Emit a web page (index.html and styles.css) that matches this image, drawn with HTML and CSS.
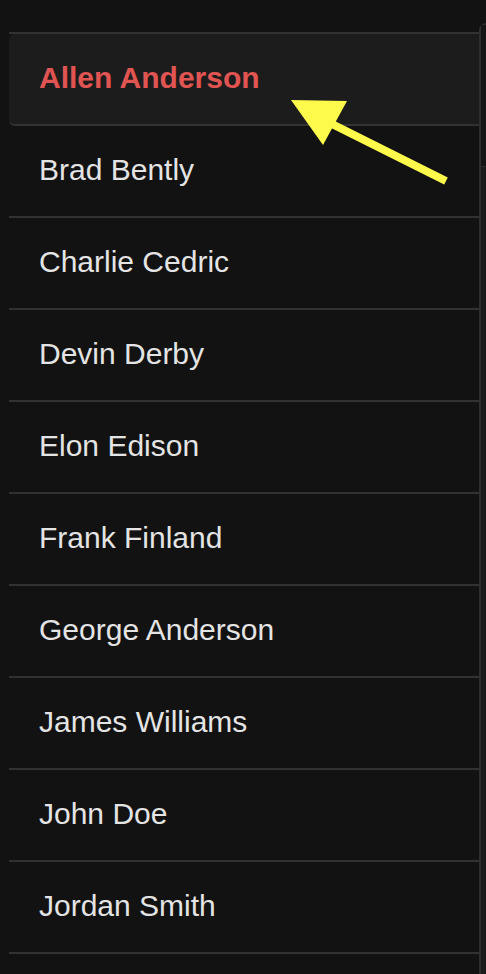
FILE: index.html
```html
<!DOCTYPE html>
<html lang="en">
<head>
    <meta charset="UTF-8">
    <meta name="viewport" content="width=device-width, initial-scale=1.0">
    <title>Contacts</title>
    <link rel="stylesheet" href="styles.css">
</head>
<body>
    <div class="panel">
        <ul class="contact-list">
            <li class="contact active">Allen Anderson</li>
            <li class="contact">Brad Bently</li>
            <li class="contact">Charlie Cedric</li>
            <li class="contact">Devin Derby</li>
            <li class="contact">Elon Edison</li>
            <li class="contact">Frank Finland</li>
            <li class="contact">George Anderson</li>
            <li class="contact">James Williams</li>
            <li class="contact">John Doe</li>
            <li class="contact">Jordan Smith</li>
        </ul>
    </div>

    <div class="side-scroll">
        <div class="side-track"></div>
        <div class="side-rest"></div>
    </div>

    <!-- annotation arrow pointing at the selected contact -->
    <svg class="pointer" width="486" height="200" viewBox="0 0 486 200">
        <line x1="332" y1="124" x2="446" y2="181" stroke="#fdfa4c" stroke-width="8" />
        <polygon points="291,100 347,101 323,145" fill="#fdfa4c" />
    </svg>
</body>
</html>
```

FILE: styles.css
```css
html, body {
    margin: 0;
    padding: 0;
}

body {
    font-family: 'Liberation Sans', Arial, Helvetica, sans-serif;
    background-color: #121212;
    color: #e4e4e4;
    display: flex;
    height: 974px;
    overflow: hidden;
    position: relative;
}

.panel {
    flex: 1;
    padding: 32px 0 0 9px;
}

.contact-list {
    list-style: none;
    margin: 0;
    padding: 0;
    border-top: 2px solid #323232;
}

.contact {
    height: 92px;
    box-sizing: border-box;
    padding: 0 0 3px 30px;
    display: flex;
    align-items: center;
    font-size: 30px;
    border-bottom: 2px solid #323232;
}

.contact.active {
    background-color: #1c1c1c;
    color: #e05452;
    font-weight: bold;
    border-radius: 6px 0 0 6px;
}

.side-scroll {
    width: 5px;
    margin-top: 23px;
    border-left: 2px solid #2e2e2e;
    border-top: 2px solid #2e2e2e;
    border-top-left-radius: 7px;
    display: flex;
    flex-direction: column;
}

.side-track {
    height: 141px;
    background-color: #151515;
}

.side-rest {
    flex: 1;
    background-color: #1b1b1b;
    border-top: 1px solid #2c2c2c;
}

.pointer {
    position: absolute;
    top: 0;
    left: 0;
    pointer-events: none;
}
```
